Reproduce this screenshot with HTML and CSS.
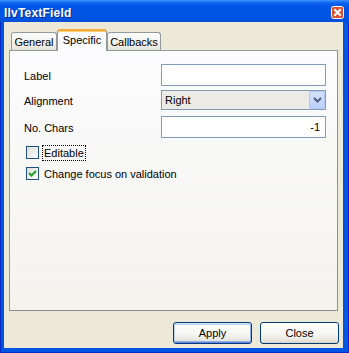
FILE: index.html
```html
<!DOCTYPE html>
<html>

<head>
    <title>IlvTextField</title>
    <link rel="stylesheet" href="styles.css">
</head>

<body>
    <div class="window">
        <div class="titlebar">
            <span class="title">IlvTextField</span>
            <span class="close-btn">
                <svg width="13" height="13" viewBox="0 0 13 13">
                    <rect x="0.5" y="0.5" width="12" height="12" rx="2" fill="#d9512f" stroke="#fff" />
                    <path d="M4 4 L9 9 M9 4 L4 9" stroke="#fff" stroke-width="2" stroke-linecap="square" />
                </svg>
            </span>
        </div>
        <div class="body">
            <div class="tabs">
                <div class="tab tab-general">General</div>
                <div class="tab tab-specific active">Specific</div>
                <div class="tab tab-callbacks">Callbacks</div>
            </div>
            <div class="panel">
                <div class="row row-label">
                    <span class="caption">Label</span>
                    <div class="field"></div>
                </div>
                <div class="row row-align">
                    <span class="caption">Alignment</span>
                    <div class="select">
                        <span class="select-text">Right</span>
                        <span class="select-arrow">
                            <svg width="9" height="6" viewBox="0 0 9 6">
                                <path d="M1 1 L4.5 4.5 L8 1" fill="none" stroke="#4d6185" stroke-width="2" />
                            </svg>
                        </span>
                    </div>
                </div>
                <div class="row row-chars">
                    <span class="caption">No. Chars</span>
                    <div class="field field-num">-1</div>
                </div>
                <div class="check-row check-editable">
                    <span class="checkbox"></span>
                    <span class="check-text focused">Editable</span>
                </div>
                <div class="check-row check-focus">
                    <span class="checkbox">
                        <svg width="11" height="11" viewBox="0 0 11 11">
                            <path d="M2 5 L4.5 7.5 L9 3" fill="none" stroke="#21a121" stroke-width="2" />
                        </svg>
                    </span>
                    <span class="check-text">Change focus on validation</span>
                </div>
            </div>
            <div class="buttons">
                <button class="btn btn-default">Apply</button>
                <button class="btn">Close</button>
            </div>
        </div>
    </div>
</body>

</html>
```

FILE: styles.css
```css
html,
body {
    margin: 0;
    padding: 0;
}

body {
    width: 349px;
    height: 353px;
    overflow: hidden;
    font-family: "Liberation Sans", Arial, sans-serif;
    font-size: 11px;
    color: #000;
}

.window {
    width: 349px;
    height: 353px;
    box-sizing: border-box;
    display: flex;
    flex-direction: column;
    background: #0055e5;
    border-left: 1px solid #0a2cc4;
    border-right: 1px solid #0a2cc4;
    border-bottom: 1px solid #0a2cc4;
}

.titlebar {
    height: 22px;
    flex: none;
    display: flex;
    align-items: center;
    justify-content: space-between;
    padding: 2px 5px 0 3px;
    box-sizing: border-box;
    margin: 0 -1px;
    background: linear-gradient(#3d92ff 0, #0d62f2 3px, #0055e5 7px, #0055e5 17px, #004fd8 22px);
    color: #fff;
}

.title {
    font-weight: bold;
    font-size: 12px;
    letter-spacing: 0.2px;
    text-shadow: 1px 1px #0a2a8a;
    padding-left: 1px;
    margin-top: 2px;
}

.close-btn {
    display: flex;
    margin-top: 1px;
}

.body {
    flex: 1;
    margin: 0 5px 4px 3px;
    background: #ece9d8;
    display: flex;
    flex-direction: column;
    padding: 7px 5px 0 5px;
}

/* tabs */

.tabs {
    display: flex;
    align-items: flex-end;
    height: 21px;
    padding-left: 2px;
    position: relative;
    z-index: 1;
}

.tab {
    height: 18px;
    box-sizing: border-box;
    border: 1px solid #919b9c;
    border-bottom: none;
    border-radius: 3px 3px 0 0;
    background: linear-gradient(#fefefe, #f0efea 70%, #e3e1d9);
    text-align: center;
    line-height: 18px;
}

.tab-general {
    width: 46px;
}

.tab-specific {
    width: 50px;
}

.tab-callbacks {
    width: 54px;
}

.tab.active {
    height: 22px;
    margin-bottom: -1px;
    border-top: 2px solid #f5ab3a;
    background: #fcfcfe;
    line-height: 18px;
    box-shadow: inset 0 1px #ffcf6a;
}

.panel {
    height: 261px;
    box-sizing: border-box;
    border: 1px solid #919b9c;
    border-bottom-color: #8a918f;
    border-right-color: #8a918f;
    background: linear-gradient(#fcfcfe, #f4f3ee);
    padding: 13px 11px 0 14px;
}

.row {
    display: flex;
    align-items: center;
}

.caption {
    width: 137px;
    padding-top: 1px;
}

.row-label {
    height: 22px;
}

.row-align {
    height: 20px;
    margin-top: 4px;
}

.row-chars {
    height: 22px;
    margin-top: 6px;
}

.field {
    width: 165px;
    height: 22px;
    box-sizing: border-box;
    border: 1px solid #7f9db9;
    background: #fff;
}

.field-num {
    text-align: right;
    line-height: 20px;
    padding-right: 5px;
}

.select {
    width: 165px;
    height: 20px;
    box-sizing: border-box;
    border: 1px solid #7f9db9;
    background: #ecebe5;
    display: flex;
    align-items: center;
    justify-content: space-between;
}

.select-text {
    padding-left: 3px;
}

.select-arrow {
    width: 16px;
    height: 18px;
    box-sizing: border-box;
    border: 1px solid #b3c8f5;
    border-radius: 2px;
    background: linear-gradient(#d6e3fd, #bccffa);
    display: flex;
    align-items: center;
    justify-content: center;
}

.check-row {
    display: flex;
    align-items: center;
    height: 17px;
    padding-left: 2px;
}

.check-editable {
    margin-top: 6px;
}

.check-focus {
    margin-top: 4px;
}

.checkbox {
    width: 13px;
    height: 13px;
    box-sizing: border-box;
    border: 1px solid #1c5180;
    background: linear-gradient(135deg, #dcdcd7, #ffffff);
    display: flex;
    align-items: center;
    justify-content: center;
    margin-right: 3px;
}

.check-text {
    padding: 1px 1px;
    border: 1px dotted transparent;
}

.check-text.focused {
    border-color: #000;
}

/* buttons */

.buttons {
    display: flex;
    justify-content: flex-end;
    gap: 8px;
    margin-top: 11px;
    margin-right: -1px;
}

.btn {
    width: 79px;
    height: 22px;
    box-sizing: border-box;
    border: 1px solid #003c74;
    border-radius: 3px;
    background: linear-gradient(#ffffff, #f4f4f0 60%, #e6e3da 90%, #d6d0c5);
    font-family: "Liberation Sans", Arial, sans-serif;
    font-size: 11px;
    color: #000;
    padding: 0;
}

.btn-default {
    box-shadow: inset 0 1px #cee7ff, inset 1px 0 #bcd4f6, inset -1px 0 #89ade4, inset 0 -1px #6982ee, inset 0 2px #bcd4f6, inset 0 -2px #89ade4;
}
```
